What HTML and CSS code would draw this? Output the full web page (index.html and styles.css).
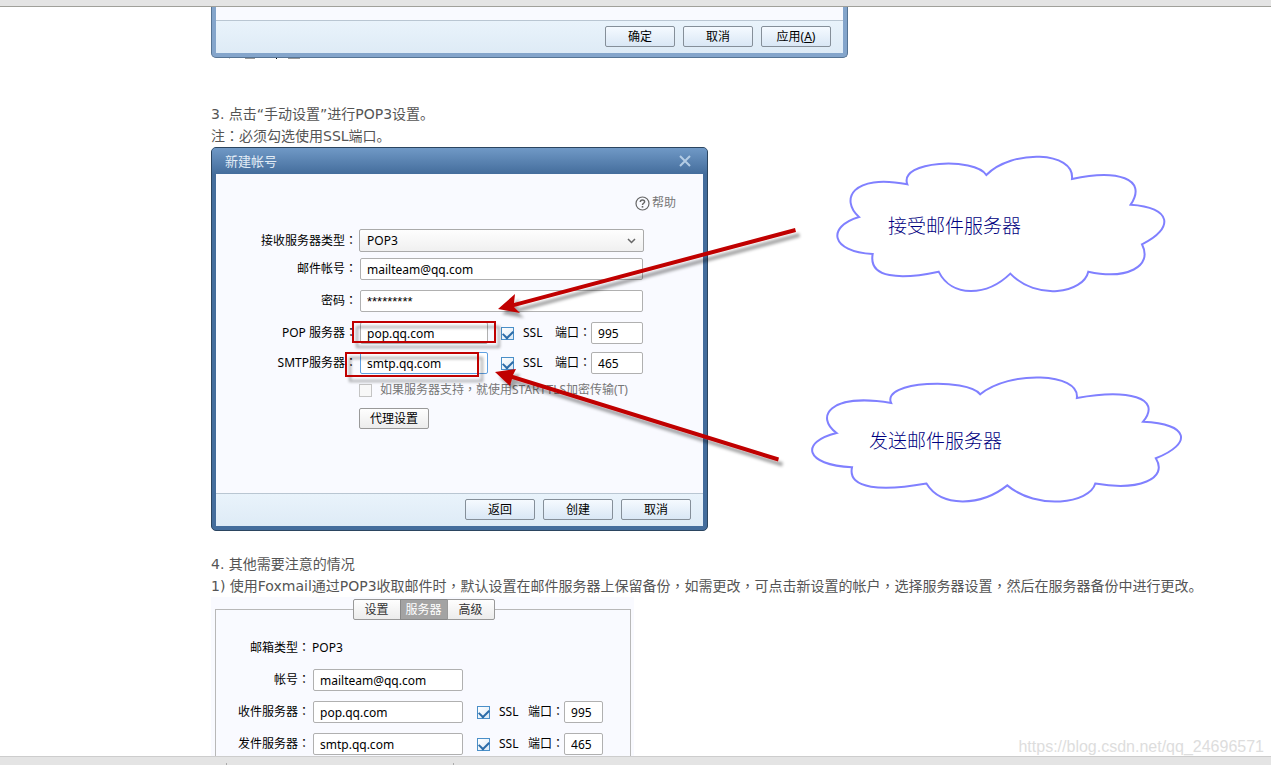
FILE: index.html
```html
<!DOCTYPE html>
<html lang="zh-CN">
<head>
<meta charset="utf-8">
<title>Foxmail POP3 设置</title>
<link rel="stylesheet" href="styles.css">
</head>
<body>
<header class="top-bar"></header>
<main class="article">
  <section class="dialog dialog-light" aria-label="设置">
    <div class="dialog-rest"></div>
    <footer class="dialog-footer">
      <button class="btn btn-blue" type="button">确定</button>
      <button class="btn btn-blue" type="button">取消</button>
      <button class="btn btn-blue" type="button">应用(<u>A</u>)</button>
    </footer>
  </section>
  <div class="cut-line"></div>

  <p class="text step-three">3. 点击“手动设置”进行POP3设置。<br>注<span class="mid" lang="zh-TW">：</span>必须勾选使用SSL端口。</p>

  <div class="figure">
    <section class="dialog dialog-account" aria-label="新建帐号">
      <header class="title-bar">
        <span>新建帐号</span>
        <button class="close" type="button" aria-label="关闭"><svg width="12" height="12" viewBox="0 0 12 12"><path d="M1 1 11 11M11 1 1 11" stroke="#b4cce4" stroke-width="2" fill="none"/></svg></button>
      </header>
      <form class="form">
        <a class="help" href="#"><svg width="15" height="15" viewBox="0 0 15 15"><circle cx="7.500" cy="7.500" r="6.500" fill="none" stroke="#666" stroke-width="1.200"/><path d="M5.300 6C5.300 3.200 9.600 3.300 9.600 5.700 9.600 7.300 7.500 7.200 7.500 9" fill="none" stroke="#666" stroke-width="1.500"/><rect x="6.700" y="10" width="1.600" height="1.600" fill="#666"/></svg>帮助</a>
        <div class="row row-type"><label class="label" for="type">接收服务器类型<span class="mid" lang="zh-TW">：</span></label>
          <div class="select-box"><select id="type" class="select"><option>POP3</option></select><svg class="chevron" width="9" height="6" viewBox="0 0 9 6"><path d="M1 1 4.500 4.500 8 1" fill="none" stroke="#666" stroke-width="1.500"/></svg></div></div>
        <div class="row row-account"><label class="label" for="account">邮件帐号<span class="mid" lang="zh-TW">：</span></label><input class="field wide" id="account" value="mailteam@qq.com"></div>
        <div class="row row-password"><label class="label" for="password">密码<span class="mid" lang="zh-TW">：</span></label><input class="field wide stars" id="password" value="*********"></div>
        <div class="row row-pop"><label class="label" for="pop">POP 服务器<span class="mid" lang="zh-TW">：</span></label><input class="field server" id="pop" value="pop.qq.com"><input class="check" type="checkbox" id="ssl1" checked><label class="ssl" for="ssl1">SSL</label><label for="port1">端口<span class="mid" lang="zh-TW">：</span></label><input class="field port" id="port1" value="995"></div>
        <div class="row row-smtp"><label class="label" for="smtp">SMTP服务器<span class="mid" lang="zh-TW">：</span></label><input class="field server focused" id="smtp" value="smtp.qq.com"><input class="check" type="checkbox" id="ssl2" checked><label class="ssl" for="ssl2">SSL</label><label for="port2">端口<span class="mid" lang="zh-TW">：</span></label><input class="field port" id="port2" value="465"></div>
        <div class="row row-tls"><input class="check check-off" type="checkbox" id="tls" disabled><label for="tls">如果服务器支持<span class="mid" lang="zh-TW">，</span>就使用STARTTLS加密传输(T)</label></div>
        <div class="row row-proxy"><button class="btn btn-gray" type="button">代理设置</button></div>
      </form>
      <footer class="dialog-footer">
        <button class="btn btn-blue" type="button">返回</button>
        <button class="btn btn-blue" type="button">创建</button>
        <button class="btn btn-blue" type="button">取消</button>
      </footer>
    </section>
    <svg class="notes" width="1000" height="384" viewBox="211 147 1000 384">
      <defs>
        <path id="cloud" vector-effect="non-scaling-stroke" d="M262 118C235 46 465 36 499 90C575 12 765 18 756 102C890 72 985 100 932 179C1055 186 1065 250 966 298C1000 365 920 405 805 380C790 445 650 468 571 386C500 455 395 458 356 380C240 405 145 400 158 327C30 320 20 245 117 216C60 165 95 85 262 118Z"/>
        <filter id="shadow" filterUnits="userSpaceOnUse" x="211" y="147" width="1000" height="384"><feDropShadow dx="4" dy="5" stdDeviation="1.500" flood-color="#000" flood-opacity=".35"/></filter>
      </defs>
      <g fill="none" stroke="#8080ff" stroke-width="2">
        <use href="#cloud" transform="translate(820 145) scale(.3333)"/>
        <use href="#cloud" transform="translate(792.600 366.600) scale(.376 .3077)"/>
      </g>
      <g class="note-text"><text x="888" y="233">接受邮件服务器</text><text x="869" y="448">发送邮件服务器</text></g>
      <g filter="url(#shadow)">
        <g fill="none" stroke="#c00000" stroke-width="2"><rect x="353" y="322" width="142" height="20"/><rect x="346" y="353" width="132" height="23"/></g>
        <g fill="#c00000"><path d="M498 309 515 294 514 303 795 228 796 232 514 307 520 313Z"/><path d="M495 372 516 369 513 375 779 457.500 778 461.500 512 379 510 386Z"/></g>
      </g>
    </svg>
  </div>

  <p class="text step-four">4. 其他需要注意的情况<br>1) 使用Foxmail通过POP3收取邮件时<span class="mid" lang="zh-TW">，</span>默认设置在邮件服务器上保留备份<span class="mid" lang="zh-TW">，</span>如需更改<span class="mid" lang="zh-TW">，</span>可点击新设置的帐户<span class="mid" lang="zh-TW">，</span>选择服务器设置<span class="mid" lang="zh-TW">，</span>然后在服务器备份中进行更改。</p>

  <section class="panel">
    <nav class="tabs"><button class="tab" type="button">设置</button><button class="tab tab-on" type="button">服务器</button><button class="tab" type="button">高级</button></nav>
    <form class="frame">
      <div class="row"><span class="label">邮箱类型<span class="mid" lang="zh-TW">：</span></span><span class="value">POP3</span></div>
      <div class="row"><label class="label" for="p-account">帐号<span class="mid" lang="zh-TW">：</span></label><input class="field" id="p-account" value="mailteam@qq.com"></div>
      <div class="row"><label class="label" for="p-in">收件服务器<span class="mid" lang="zh-TW">：</span></label><input class="field" id="p-in" value="pop.qq.com"><input class="check" type="checkbox" id="p-ssl1" checked><label class="ssl" for="p-ssl1">SSL</label><label for="p-port1">端口<span class="mid" lang="zh-TW">：</span></label><input class="field port" id="p-port1" value="995"></div>
      <div class="row"><label class="label" for="p-out">发件服务器<span class="mid" lang="zh-TW">：</span></label><input class="field" id="p-out" value="smtp.qq.com"><input class="check" type="checkbox" id="p-ssl2" checked><label class="ssl" for="p-ssl2">SSL</label><label for="p-port2">端口<span class="mid" lang="zh-TW">：</span></label><input class="field port" id="p-port2" value="465"></div>
    </form>
  </section>
  <div class="watermark">https://blog.csdn.net/qq_24696571</div>
</main>
<footer class="bottom-bar"><i></i><i></i></footer>
</body>
</html>
```
FILE: styles.css
```css
* { box-sizing: border-box; }
body {
  margin: 0;
  height: 100vh;
  display: flex;
  flex-direction: column;
  overflow: hidden;
  background: #fff;
  color: #000;
  font: 12px/16px "Noto Sans", "Noto Sans CJK SC", sans-serif;
}
input, select, button { font: inherit; color: inherit; }
.mid { font-family: "Noto Sans CJK TC", sans-serif; line-height: 1px; }

.top-bar { flex: none; height: 7px; background: #e4e4e4; border-bottom: 1px solid #a0a09a; }
.bottom-bar {
  flex: none;
  display: flex;
  align-items: flex-end;
  height: 9px;
  padding-left: 226px;
  gap: 226px;
  background: #e4e4e4;
  border-top: 1px solid #cdcdcd;
}
.bottom-bar i { width: 1px; height: 2px; background: #aaa; }

.article { flex: 1; min-height: 0; position: relative; overflow: hidden; padding-left: 211px; }
.text {
  margin: 0;
  color: #555;
  font: 14px/22px "DejaVu Sans", "Noto Sans CJK SC", sans-serif;
}
.step-three { margin-top: 44px; }
.step-four { margin-top: 22px; }

.dialog { border: 1px solid #2b4560; border-radius: 5px; background: #446d9c; padding: 0 4px 4px; }
.dialog-light {
  width: 637px;
  border-color: #567494;
  border-top: 0;
  border-radius: 0 0 5px 5px;
  background: #84a5cb;
}
.dialog-rest { height: 13px; background: #f9faff; }
.dialog-footer {
  display: flex;
  justify-content: flex-end;
  gap: 8px;
  padding: 5px 12px 6px;
  border-top: 1px solid #b9c6d2;
  background: linear-gradient(#e9f3fb, #deebf6);
}
.cut-line {
  width: 71px;
  height: 1px;
  margin-left: 18px;
  background: linear-gradient(90deg, #ccc 1px, #fff 1px 16px, #999 16px 26px, #fff 26px 47px, #000 47px 48px, #fff 48px 59px, #999 59px);
}

.btn {
  min-width: 70px;
  height: 21px;
  padding: 0;
  border: 1px solid #858f99;
  border-radius: 2px;
  line-height: 19px;
}
.btn-blue { background: linear-gradient(#f5faff, #d9e7f5); }
.btn-gray { background: linear-gradient(#fefefe, #ececec); border-color: #999; }

.figure { position: relative; }
.dialog-account { width: 497px; }
.title-bar {
  display: flex;
  justify-content: space-between;
  align-items: center;
  height: 26px;
  margin: 0 -4px;
  padding: 0 16px 0 13px;
  border-radius: 4px 4px 0 0;
  background: linear-gradient(#7099c6, #446d9c);
  color: #e2ecf6;
  font-size: 13px;
}
.close { display: flex; padding: 0; border: 0; background: none; }
.form { height: 319px; padding: 21px 27px 0 0; background: #f9faff; }
.help {
  display: flex;
  justify-content: flex-end;
  align-items: center;
  gap: 2px;
  height: 16px;
  color: #777;
  text-decoration: none;
}
.row { display: flex; align-items: center; height: 22px; white-space: nowrap; }
.label { width: 141px; margin-right: 2px; text-align: right; }
.row-type { height: 23px; margin-top: 18px; }
.row-account { margin-top: 6px; }
.row-password, .row-pop { margin-top: 10px; }
.row-smtp { margin-top: 8px; }
.row-tls { height: 16px; margin: 8px 0 0 143px; color: #777; gap: 8px; }
.row-proxy { margin: 9px 0 0 143px; }

.field {
  height: 22px;
  margin: 0 0 0 1px;
  padding: 0 6px;
  border: 1px solid #b0b0b0;
  border-radius: 2px;
  background: #fff;
}
.wide { width: 283px; }
.stars { font: 13px/16px "Liberation Sans", sans-serif; }
.server { width: 128px; }
.port { width: 52px; margin-left: 0; }
.focused { border-color: #60a0e0; }
.select-box { position: relative; width: 285px; }
.select {
  display: block;
  appearance: none;
  width: 100%;
  height: 23px;
  padding: 0 7px;
  border: 1px solid #aaa;
  border-radius: 2px;
  background: linear-gradient(#fefefe, #f0f0f0);
}
.chevron { position: absolute; right: 8px; top: 9px; }
.check {
  appearance: none;
  display: grid;
  justify-content: center;
  flex: none;
  width: 13px;
  height: 13px;
  margin: 0 9px 0 13px;
  border: 1px solid #4a8fc8;
  background: linear-gradient(135deg, #fff, #dceaf6);
}
.check:checked::after {
  content: "";
  width: 8px;
  height: 5px;
  margin-top: 2px;
  border: solid #2c6ca8;
  border-width: 0 0 2px 2px;
  transform: rotate(-45deg);
}
.check-off { margin: 0; border-color: #c4c4c4; background: #f8f8f8; }
.ssl { width: 32px; }

.notes { position: absolute; left: 0; top: 0; pointer-events: none; }
.note-text { fill: #000080; font: 300 19px "Noto Sans CJK SC", sans-serif; }

.panel { width: 423px; padding: 2px 3px 0 4px; background: #f9faff; }
.tabs { position: relative; display: flex; justify-content: center; height: 21px; }
.tab {
  width: 48px;
  height: 21px;
  margin-right: -1px;
  padding: 0;
  border: 1px solid #999;
  background: linear-gradient(#fefefe, #ececec);
  color: #333;
  line-height: 19px;
}
.tab:first-child { border-radius: 2px 0 0 2px; }
.tab:last-child { border-radius: 0 2px 2px 0; }
.tab-on { background: #a3a3a3; border-color: #888; color: #fff; }
.frame {
  display: flex;
  flex-direction: column;
  gap: 10px;
  height: 180px;
  margin-top: -11px;
  padding-top: 27px;
  border: 1px solid #b8b8b8;
}
.frame .label { width: 94px; }
.frame .field { width: 150px; }
.frame .field.port { width: 39px; }
.frame .check { margin-left: 14px; }
.frame .ssl { width: 29px; }

.watermark {
  position: absolute;
  right: 7px;
  bottom: 0;
  color: #ddd;
  font: 16px/18px "Liberation Sans", sans-serif;
}
```
